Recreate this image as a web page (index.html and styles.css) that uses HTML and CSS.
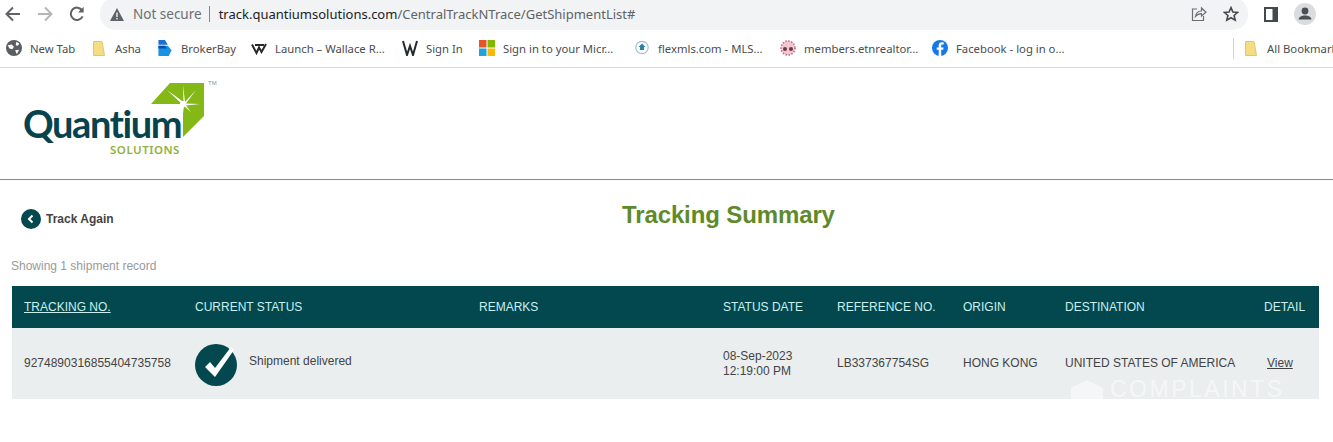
FILE: index.html
```html
<!DOCTYPE html>
<html lang="en">
<head>
<meta charset="utf-8">
<title>Tracking Summary</title>
<link rel="stylesheet" href="styles.css">
</head>
<body>
<div class="toolbar">
  <div class="nav">
    <svg class="nav-icon" viewBox="0 0 18 18"><path d="M16 9H3M9 2.5 2.5 9 9 15.5" class="stroke-dark"/></svg>
    <svg class="nav-icon" viewBox="0 0 18 18"><path d="M2 9h13M9 2.5 15.5 9 9 15.5" class="stroke-light"/></svg>
    <svg class="nav-icon" viewBox="0 0 18 18"><path d="M14.6 11.4A6.2 6.2 0 1 1 14 5.2" class="stroke-dark"/><path d="M15.6 1.8v5.6H10z" class="fill-dark"/></svg>
  </div>
  <div class="omnibox">
    <svg class="warn" viewBox="0 0 14 13"><path d="M7 0 14 13H0z" class="fill-dark"/><rect x="6.3" y="4.5" width="1.4" height="4.5" fill="#f1f3f4"/><rect x="6.3" y="10" width="1.4" height="1.4" fill="#f1f3f4"/></svg>
    <span class="insecure">Not secure</span>
    <span class="omni-sep"></span>
    <span class="url">track.quantiumsolutions.com<span class="url-path">/CentralTrackNTrace/GetShipmentList#</span></span>
    <div class="omni-actions">
      <svg class="omni-icon" viewBox="0 0 16 16"><path d="M6 3H1.5v11.5h11V10" class="stroke-thin"/><path d="M4.5 10.5C5 7 7.5 5 10.5 5V2L15 6.2 10.5 10V7.6C8 7.6 6 8.6 4.5 10.5z" class="stroke-thin"/></svg>
      <svg class="omni-icon" viewBox="0 0 16 16"><path d="M8 1.6 9.9 6l4.8.4-3.6 3.1 1.1 4.7L8 11.7l-4.2 2.5 1.1-4.7L1.3 6.4 6.1 6z" class="stroke-star"/></svg>
    </div>
  </div>
  <div class="profile">
    <svg class="panel" viewBox="0 0 14 15"><rect width="14" height="15" fill="#45494d"/><rect x="2" y="2" width="6.5" height="11" fill="#fff"/></svg>
    <svg class="avatar" viewBox="0 0 22 22"><circle cx="11" cy="11" r="11" fill="#dadce0"/><circle cx="11" cy="8" r="3.4" fill="#4b4f54"/><path d="M4.6 16.5c0-2.8 3.6-4 6.4-4s6.4 1.200 6.400 4z" fill="#4b4f54"/></svg>
  </div>
</div>

<div class="bookmarks">
  <a class="bm"><svg class="fav" viewBox="0 0 14 14"><circle cx="7" cy="7" r="7" fill="#5a5d61"/><path d="M1.500 4.500 5 4l2 2-1.500 2L3 7.500zM9 1.500l2.500 1.500-1 2-2-.5zM8 9l3.500-.5L9.500 12.500z" fill="#fff"/></svg><span>New Tab</span></a>
  <a class="bm bm-folder"><svg class="fav folder" viewBox="0 0 12 15"><path d="M.5.5h8.500L11.500 14.500H.5z" class="folder-shape"/></svg><span>Asha</span></a>
  <a class="bm"><svg class="fav" viewBox="0 0 16 17"><path d="M1 0h7l3 5H1z" fill="#1b6fd1"/><path d="M1 6h10l4 5-3 6H1z" fill="#1793e6"/><path d="M1 6h7l2 3H1z" fill="#0b4ea8"/></svg><span>BrokerBay</span></a>
  <a class="bm"><svg class="fav" viewBox="0 0 16 16"><path d="M1 4.500 5.500 13 8 7.500 10.500 12 15 4M4 5h9" class="w-mark"/></svg><span>Launch – Wallace R...</span></a>
  <a class="bm"><svg class="fav" viewBox="0 0 16 16"><path d="M1 1 5 15 8 6 11 15 15 1" class="w-mark"/></svg><span>Sign In</span></a>
  <a class="bm"><svg class="fav" viewBox="0 0 16 16"><rect width="7.500" height="7.500" fill="#e2552b"/><rect x="8.500" width="7.500" height="7.500" fill="#7fba00"/><rect y="8.500" width="7.500" height="7.500" fill="#1fa3dc"/><rect x="8.500" y="8.500" width="7.500" height="7.500" fill="#fdb900"/></svg><span>Sign in to your Micr...</span></a>
  <a class="bm"><svg class="fav" viewBox="0 0 16 16"><circle cx="8" cy="7.500" r="6.200" fill="#fff" stroke="#9fc0d0" stroke-width="1.200"/><path d="M8 3.500 11.500 7H10v3H6V7H4.500z" fill="#2f7fa8"/></svg><span>flexmls.com - MLS...</span></a>
  <a class="bm"><svg class="fav" viewBox="0 0 16 16"><circle cx="8" cy="8" r="7" fill="#f2c8d0"/><circle cx="8" cy="8" r="7" fill="none" stroke="#c9607a" stroke-width="1.500" stroke-dasharray="1.500 1.500"/><circle cx="5" cy="9" r="2" fill="#6b3a44"/><circle cx="11" cy="9" r="2" fill="#6b3a44"/></svg><span>members.etnrealtor...</span></a>
  <a class="bm"><svg class="fav" viewBox="0 0 16 16"><circle cx="8" cy="8" r="8" fill="#1877e8"/><path d="M9.200 16V9.800h2l.4-2.400H9.200V5.900c0-.8.300-1.300 1.300-1.300h1.200V2.500c-.5-.1-1.200-.2-1.900-.2-1.900 0-3.100 1.100-3.100 3.200v1.900H4.700v2.400h2V16z" fill="#fff"/></svg><span>Facebook - log in o...</span></a>
  <span class="bm-sep"></span>
  <a class="bm bm-folder"><svg class="fav folder" viewBox="0 0 12 15"><path d="M.5.5h8.500L11.500 14.500H.5z" class="folder-shape"/></svg><span>All Bookmarks</span></a>
</div>

<header class="site-header">
  <div class="logo">
    <span class="logo-word">Quantium</span>
    <span class="logo-sub">SOLUTIONS</span>
    <svg class="logo-mark" viewBox="0 0 70 60">
      <path d="M24 1H58V34L37 55V22H5z" fill="#84b817"/>
      <path d="M36 22 21 8 37.500 20 37 3 39 20 50 8 40 21.500 54 22 40 23.500 45 30 38 24 36 38 35.500 24 27 24 35 22z" fill="#fff"/>
      <circle cx="37" cy="22" r="3" fill="#fff"/>
    </svg>
    <span class="logo-tm">TM</span>
  </div>
</header>

<main>
  <div class="title-row">
    <a class="back"><svg class="back-icon" viewBox="0 0 20 20"><circle cx="10" cy="10" r="10" fill="#03474f"/><path d="M11.500 6.500 8 10l3.500 3.500" fill="none" stroke="#fff" stroke-width="2"/></svg>Track Again</a>
    <h1>Tracking Summary</h1>
  </div>
  <p class="count">Showing 1 shipment record</p>
  <div class="table-wrap">
    <table>
      <colgroup>
        <col class="c1"><col class="c2"><col class="c3"><col class="c4"><col class="c5"><col class="c6"><col class="c7"><col class="c8">
      </colgroup>
      <thead>
        <tr>
          <th><u>TRACKING NO.</u></th>
          <th>CURRENT STATUS</th>
          <th>REMARKS</th>
          <th>STATUS DATE</th>
          <th>REFERENCE NO.</th>
          <th>ORIGIN</th>
          <th>DESTINATION</th>
          <th>DETAIL</th>
        </tr>
      </thead>
      <tbody>
        <tr>
          <td>9274890316855404735758</td>
          <td>
            <div class="status">
              <svg class="check" viewBox="0 0 42 42"><circle cx="21" cy="21" r="21" fill="#03474f"/><path d="M10 23 15 18 20 24 36 3 39 6 20 33z" fill="#fff"/></svg>
              <span>Shipment delivered</span>
            </div>
          </td>
          <td></td>
          <td>08-Sep-2023<br>12:19:00 PM</td>
          <td>LB337367754SG</td>
          <td>HONG KONG</td>
          <td>UNITED STATES OF AMERICA</td>
          <td class="view-cell"><a class="view">View</a></td>
        </tr>
      </tbody>
    </table>
    <div class="watermark">
      <svg class="wm-icon" viewBox="0 0 34 22"><path d="M1 9 17 1l16 8v13H1z" fill="#fff"/></svg>
      <span>COMPLAINTS</span>
    </div>
  </div>
</main>
</body>
</html>
```
FILE: styles.css
```css
* { box-sizing: border-box; }
html, body { margin: 0; padding: 0; }
body {
  width: 1333px;
  height: 442px;
  overflow: hidden;
  background: #fff;
  font-family: "Liberation Sans", Arial, sans-serif;
  color: #444;
}

/* browser chrome */
.toolbar { display: flex; height: 31px; }
.nav { display: flex; gap: 6px; width: 100px; align-items: center; padding-bottom: 3px; }
.nav-icon { width: 26px; height: 18px; }
.stroke-dark { fill: none; stroke: #5f6368; stroke-width: 2; }
.stroke-light { fill: none; stroke: #b4b7ba; stroke-width: 2; }
.fill-dark { fill: #5f6368; }
.stroke-thin { fill: none; stroke: #6b6f73; stroke-width: 1.200; }
.stroke-star { fill: none; stroke: #45494d; stroke-width: 1.600; }
.omnibox {
  flex: 1;
  display: flex;
  align-items: center;
  background: #f1f3f4;
  border-radius: 15px;
  margin-top: -2px;
  height: 32px;
  padding: 0 9px 0 10px;
  font-family: "Noto Sans", sans-serif;
  font-size: 13.500px;
}
.warn { width: 14px; height: 13px; margin-right: 9px; }
.insecure { color: #6c6f73; }
.omni-sep { width: 1px; height: 16px; background: #80868b; margin: 0 9px 0 7px; }
.url { color: #202124; font-size: 13px; }
.url-path { color: #5f6368; }
.omni-actions { margin-left: auto; display: flex; gap: 16px; }
.omni-icon { width: 16px; height: 16px; }
.profile { width: 85px; display: flex; align-items: center; gap: 16px; padding: 0 0 3px 16px; }
.panel { width: 14px; height: 15px; }
.avatar { width: 22px; height: 22px; }

.bookmarks {
  display: grid;
  grid-template-columns: 87px 64px 94px 151px 77px 155px 146px 152px 301px 12px 1fr;
  align-items: center;
  height: 37px;
  padding: 0 0 2px 6px;
  border-bottom: 1px solid #d9d9d9;
  font-family: "Noto Sans", sans-serif;
  font-size: 11.300px;
  color: #4a4d50;
}
.bm { display: flex; align-items: center; gap: 8px; white-space: nowrap; overflow: hidden; }
.bm-folder { gap: 10px; }
.fav { width: 16px; height: 16px; flex: none; }
.fav.folder { width: 12px; height: 15px; }
.folder-shape { fill: #f6dd84; stroke: #dfc76f; stroke-width: 1; }
.w-mark { fill: none; stroke: #26292c; stroke-width: 2; }
.bm-sep { width: 1px; height: 21px; background: #d4d4d4; }

/* site header */
.site-header { height: 112px; border-bottom: 1px solid #8a8a8a; padding: 35px 0 0 23px; }
.logo { position: relative; width: 200px; height: 60px; display: flex; flex-direction: column; }
.logo-word {
  font-family: Lato, sans-serif;
  font-weight: 700;
  font-size: 38px;
  line-height: 40px;
  color: #07434f;
  letter-spacing: -1.400px;
}
.logo-sub {
  font-family: "Noto Sans", sans-serif;
  font-weight: 600;
  font-size: 11.500px;
  line-height: 14px;
  margin: 0 0 0 87px;
  letter-spacing: 0.500px;
  color: #90b23c;
}
.logo-mark { position: absolute; left: 123px; top: -21px; width: 70px; height: 60px; }
.logo-tm { position: absolute; left: 185px; top: -23px; font-size: 6px; color: #8a9a80; }

/* content */
.title-row { position: relative; display: flex; align-items: center; height: 60px; padding: 18px 0 0 21px; }
.back { display: flex; align-items: center; gap: 5px; font-size: 12px; font-weight: 700; color: #444; }
.back-icon { width: 20px; height: 20px; }
h1 {
  position: absolute;
  left: 622px;
  top: 21px;
  margin: 0;
  font-size: 24px;
  line-height: 28px;
  font-weight: 700;
  letter-spacing: -0.120px;
  color: #5f8a2b;
}
.count { margin: 19px 0 13px 11px; font-size: 12px; line-height: 14px; color: #999; }
.table-wrap { position: relative; width: 1307px; margin-left: 12px; overflow: hidden; }
table { width: 1307px; table-layout: fixed; border-collapse: collapse; font-size: 12px; }
.c1 { width: 171px; } .c2 { width: 284px; } .c3 { width: 244px; } .c4 { width: 114px; }
.c5 { width: 126px; } .c6 { width: 102px; } .c7 { width: 199px; } .c8 { width: 67px; }
th {
  height: 42px;
  padding: 0 0 0 12px;
  background: #03474f;
  color: #c9f0ec;
  font-weight: 400;
  text-align: left;
}
td {
  height: 71px;
  padding: 0 0 0 12px;
  background: #eaeeef;
  color: #444;
  line-height: 15px;
}
.status { display: flex; align-items: flex-start; gap: 12px; margin-top: 2px; }
.status span { margin-top: 10px; }
.check { width: 42px; height: 42px; flex: none; }
.view-cell { padding-left: 15px; }
.view { text-decoration: underline; }
.watermark {
  position: absolute;
  left: 1058px;
  top: 90px;
  display: flex;
  align-items: center;
  gap: 6px;
  font-size: 23px;
  letter-spacing: 2.500px;
  color: rgba(255, 255, 255, 0.55);
}
.wm-icon { width: 34px; height: 22px; opacity: 0.5; }
```
